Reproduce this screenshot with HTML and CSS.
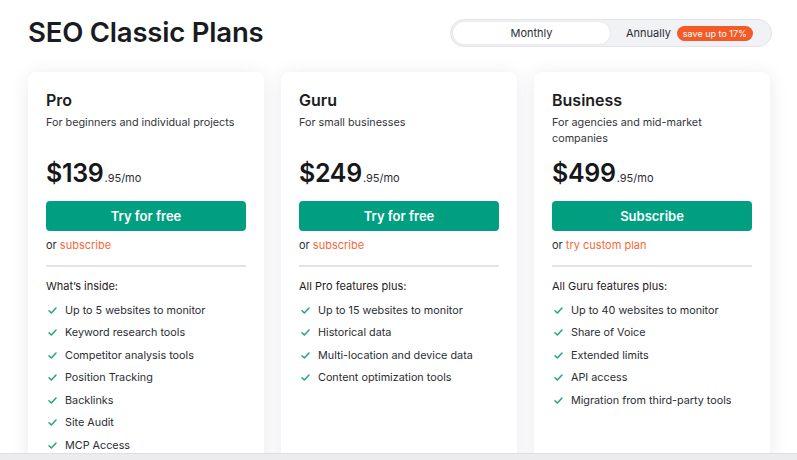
FILE: index.html
```html
<!DOCTYPE html>
<html lang="en">
<head>
<meta charset="utf-8">
<title>SEO Classic Plans</title>
<link rel="stylesheet" href="styles.css">
</head>
<body>
<div class="page">
  <main class="main">
    <header class="header">
      <h1 class="title">SEO Classic Plans</h1>
      <div class="toggle">
        <span class="toggle-opt active">Monthly</span>
        <span class="toggle-opt annual">Annually <span class="badge">save up to 17%</span></span>
      </div>
    </header>
    <section class="cards">
      <article class="card">
        <h2 class="plan">Pro</h2>
        <p class="desc">For beginners and individual projects</p>
        <div class="price"><span class="amount">$139</span><span class="cents">.95/mo</span></div>
        <a class="btn">Try for free</a>
        <p class="alt">or <span class="link">subscribe</span></p>
        <hr class="divider">
        <p class="inside">What’s inside:</p>
        <ul class="features">
          <li><svg class="check" viewBox="0 0 10 8"><path d="M1 4.2 3.7 6.8 9 1.2"/></svg>Up to 5 websites to monitor</li>
          <li><svg class="check" viewBox="0 0 10 8"><path d="M1 4.2 3.7 6.8 9 1.2"/></svg>Keyword research tools</li>
          <li><svg class="check" viewBox="0 0 10 8"><path d="M1 4.2 3.7 6.8 9 1.2"/></svg>Competitor analysis tools</li>
          <li><svg class="check" viewBox="0 0 10 8"><path d="M1 4.2 3.7 6.8 9 1.2"/></svg>Position Tracking</li>
          <li><svg class="check" viewBox="0 0 10 8"><path d="M1 4.2 3.7 6.8 9 1.2"/></svg>Backlinks</li>
          <li><svg class="check" viewBox="0 0 10 8"><path d="M1 4.2 3.7 6.8 9 1.2"/></svg>Site Audit</li>
          <li><svg class="check" viewBox="0 0 10 8"><path d="M1 4.2 3.7 6.8 9 1.2"/></svg>MCP Access</li>
        </ul>
      </article>
      <article class="card">
        <h2 class="plan">Guru</h2>
        <p class="desc">For small businesses</p>
        <div class="price"><span class="amount">$249</span><span class="cents">.95/mo</span></div>
        <a class="btn">Try for free</a>
        <p class="alt">or <span class="link">subscribe</span></p>
        <hr class="divider">
        <p class="inside">All Pro features plus:</p>
        <ul class="features">
          <li><svg class="check" viewBox="0 0 10 8"><path d="M1 4.2 3.7 6.8 9 1.2"/></svg>Up to 15 websites to monitor</li>
          <li><svg class="check" viewBox="0 0 10 8"><path d="M1 4.2 3.7 6.8 9 1.2"/></svg>Historical data</li>
          <li><svg class="check" viewBox="0 0 10 8"><path d="M1 4.2 3.7 6.8 9 1.2"/></svg>Multi-location and device data</li>
          <li><svg class="check" viewBox="0 0 10 8"><path d="M1 4.2 3.7 6.8 9 1.2"/></svg>Content optimization tools</li>
        </ul>
      </article>
      <article class="card">
        <h2 class="plan">Business</h2>
        <p class="desc">For agencies and mid-market companies</p>
        <div class="price"><span class="amount">$499</span><span class="cents">.95/mo</span></div>
        <a class="btn">Subscribe</a>
        <p class="alt">or <span class="link">try custom plan</span></p>
        <hr class="divider">
        <p class="inside">All Guru features plus:</p>
        <ul class="features">
          <li><svg class="check" viewBox="0 0 10 8"><path d="M1 4.2 3.7 6.8 9 1.2"/></svg>Up to 40 websites to monitor</li>
          <li><svg class="check" viewBox="0 0 10 8"><path d="M1 4.2 3.7 6.8 9 1.2"/></svg>Share of Voice</li>
          <li><svg class="check" viewBox="0 0 10 8"><path d="M1 4.2 3.7 6.8 9 1.2"/></svg>Extended limits</li>
          <li><svg class="check" viewBox="0 0 10 8"><path d="M1 4.2 3.7 6.8 9 1.2"/></svg>API access</li>
          <li><svg class="check" viewBox="0 0 10 8"><path d="M1 4.2 3.7 6.8 9 1.2"/></svg>Migration from third-party tools</li>
        </ul>
      </article>
    </section>
  </main>
  <div class="bottom-bar"></div>
</div>
</body>
</html>
```

FILE: styles.css
```css
* { box-sizing: border-box; }
html, body { margin: 0; padding: 0; }
body {
  background: #ffffff;
  font-family: Inter, "Noto Sans", "Liberation Sans", sans-serif;
  color: #1f2024;
}
.page {
  height: 460px;
  display: flex;
  flex-direction: column;
  overflow: hidden;
}
.main {
  flex: 1;
  overflow: hidden;
  padding: 0 26px 0 28px;
}
.header {
  display: flex;
  justify-content: space-between;
  align-items: center;
  height: 62px;
  padding-top: 2px;
}
.title {
  margin: 0;
  font-size: 27.5px;
  font-weight: 600;
  letter-spacing: -0.2px;
  color: #191b1f;
}
.toggle {
  display: flex;
  align-items: center;
  width: 322px;
  height: 28px;
  padding: 2px;
  border-radius: 14px;
  background: #f1f2f6;
  border: 1px solid #e3e4ea;
  margin-right: -1px;
  margin-top: 2px;
}
.toggle-opt {
  font-size: 11px;
  color: #2b2d33;
}
.toggle-opt.active {
  width: 157px;
  height: 22px;
  display: flex;
  align-items: center;
  justify-content: center;
  background: #fff;
  border-radius: 11px;
  box-shadow: 0 0 2px rgba(0, 0, 0, 0.12);
}
.toggle-opt.annual {
  display: flex;
  align-items: center;
  gap: 6px;
  margin-left: 16px;
}
.badge {
  background: #f45a26;
  color: #fff;
  font-size: 9px;
  padding: 2px 6px;
  border-radius: 8px;
  line-height: 11px;
}
.cards {
  display: grid;
  grid-template-columns: repeat(3, 236px);
  gap: 17px;
  margin-top: 10px;
}
.card {
  background: #fff;
  border-radius: 8px;
  height: 400px;
  padding: 18px 18px 0 18px;
  box-shadow: 0 2px 18px rgba(40, 50, 90, 0.10);
}
.plan {
  margin: 0;
  font-size: 16px;
  font-weight: 600;
  line-height: 20px;
  color: #1c1d21;
}
.desc {
  margin: 5px 0 0 0;
  font-size: 10.8px;
  line-height: 16px;
  color: #33353b;
  height: 38px;
}
.price {
  display: flex;
  align-items: baseline;
  height: 28px;
  margin-top: 5px;
}
.amount {
  font-size: 25px;
  font-weight: 600;
  letter-spacing: -0.3px;
  color: #16171b;
}
.cents {
  font-size: 11px;
  color: #2b2d33;
  margin-left: 1px;
}
.btn {
  display: flex;
  align-items: center;
  justify-content: center;
  height: 30px;
  margin-top: 15px;
  background: #009f81;
  color: #fff;
  font-size: 13px;
  font-weight: 600;
  border-radius: 4px;
}
.alt {
  margin: 7px 0 0 0;
  font-size: 11px;
  line-height: 14px;
  color: #2b2d33;
}
.link { color: #f46a38; }
.divider {
  border: 0;
  height: 2px;
  background: #e2e3e8;
  margin: 13px 0 0 0;
}
.inside {
  margin: 12px 0 0 0;
  font-size: 11px;
  line-height: 14px;
  color: #1f2024;
}
.features {
  list-style: none;
  margin: 6px 0 0 0;
  padding: 0;
}
.features li {
  display: flex;
  align-items: center;
  height: 22.5px;
  font-size: 10.8px;
  color: #2b2d33;
}
.check {
  width: 9px;
  height: 7px;
  margin: 0 8px 0 2px;
  fill: none;
  stroke: #24a47c;
  stroke-width: 1.7;
  stroke-linecap: round;
  stroke-linejoin: round;
}
.bottom-bar {
  height: 7px;
  background: #ececee;
  border-top: 1px solid #dedfe2;
}
```
